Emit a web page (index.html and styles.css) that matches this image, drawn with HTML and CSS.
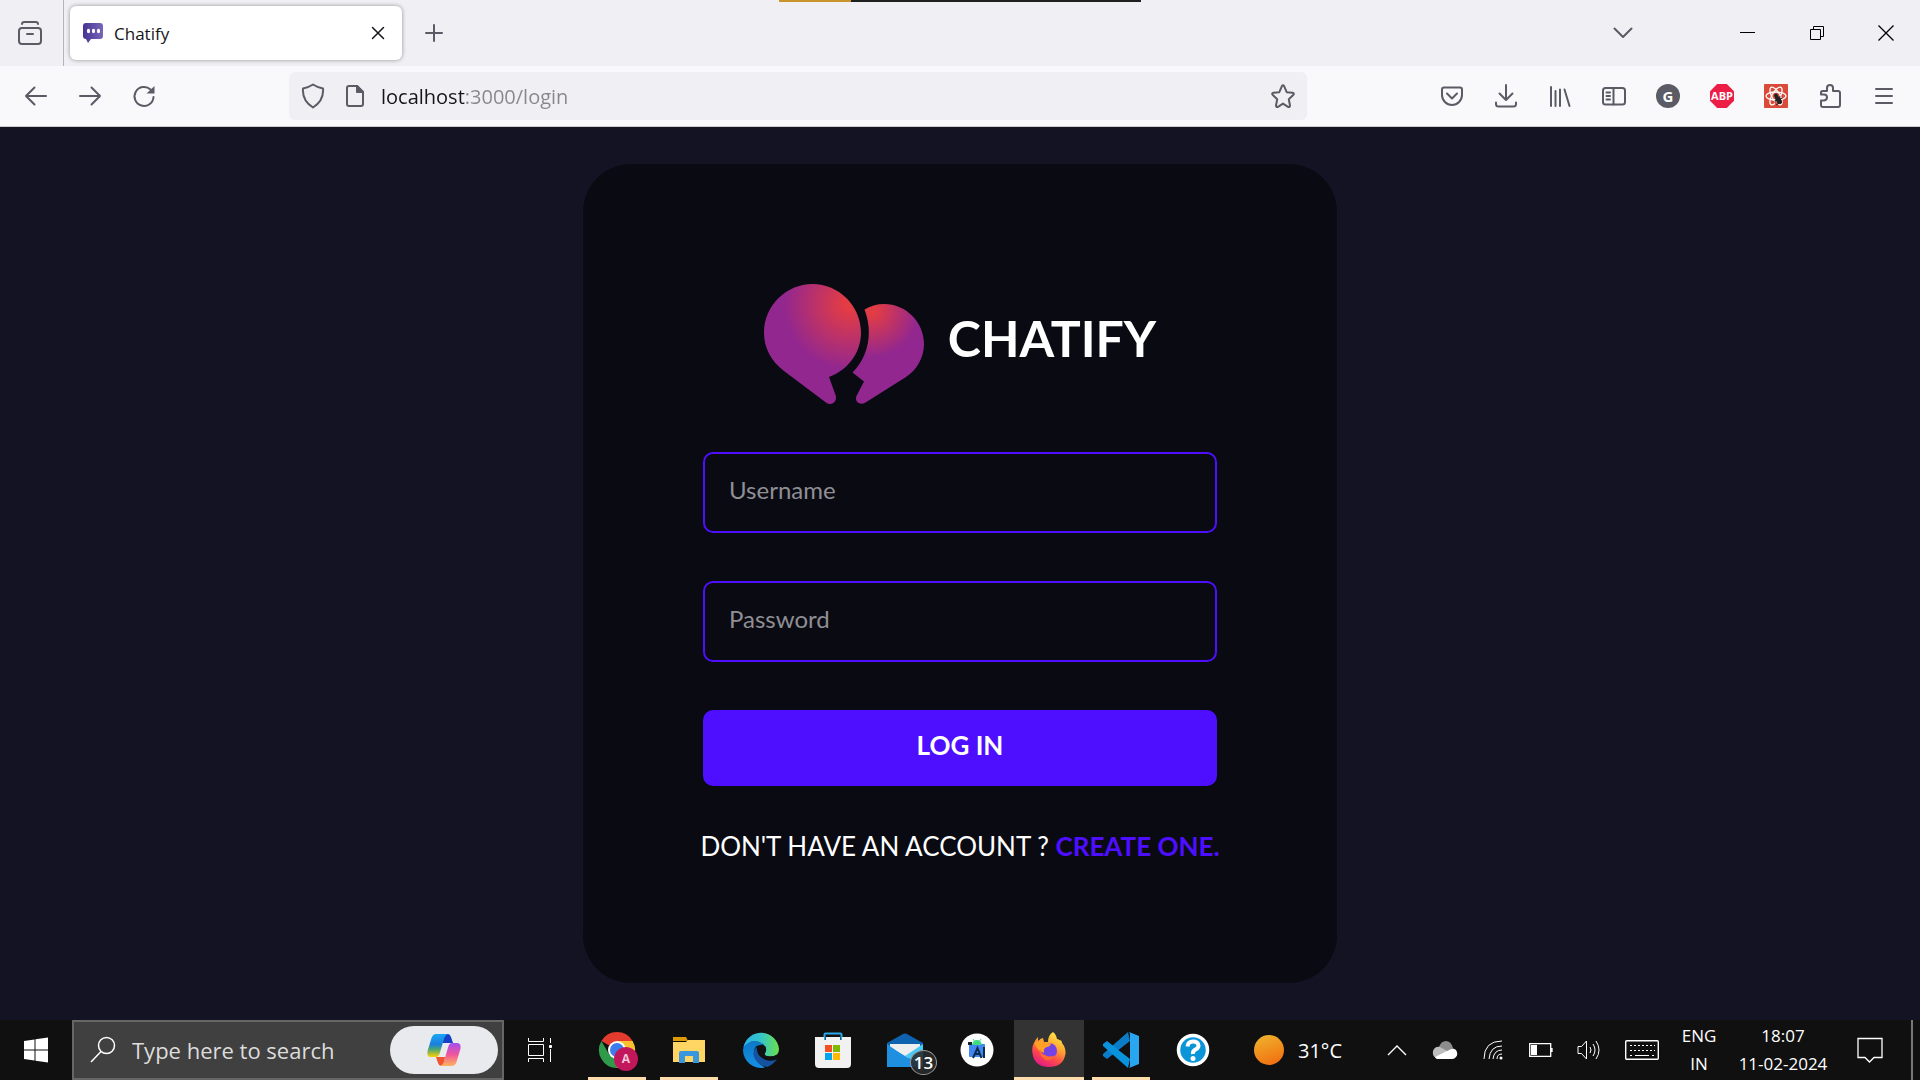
FILE: index.html
```html
<!DOCTYPE html>
<html lang="en">
<head>
<meta charset="utf-8">
<meta name="viewport" content="width=device-width, initial-scale=1">
<title>Chatify</title>
<link rel="stylesheet" href="styles.css">
</head>
<body>
<div class="screen">
  <div class="capture-bar"></div>

  <header class="browser">
    <div class="tabs">
      <button class="tabs-view" aria-label="View recent browsing">
        <svg width="24" height="24" viewBox="0 0 24 24" class="line"><rect x="1" y="7" width="22" height="16" rx="3"/><path d="M4 3Q4 1 6.500 1H17.500Q20 1 20 3M9 13h6"/></svg>
      </button>
      <div class="tab">
        <svg width="22" height="22" viewBox="0 0 22 22"><defs><linearGradient id="fav"><stop offset="0" stop-color="#463490"/><stop offset="1" stop-color="#7766bb"/></linearGradient></defs><path fill="url(#fav)" d="M4 1H18Q21 1 21 4V14Q21 17 18 17H9L6 21L4 17Q1 17 1 14V4Q1 1 4 1Z"/><g fill="#fff"><ellipse cx="6.500" cy="9" rx="1.600" ry="2.300"/><ellipse cx="11.500" cy="9" rx="1.600" ry="2.300"/><ellipse cx="16.500" cy="9" rx="1.600" ry="2.300"/></g></svg>
        <span class="tab-title">Chatify</span>
        <button class="tab-close" aria-label="Close tab"><svg width="14" height="14" viewBox="0 0 14 14" class="line dark"><path d="M1.500 1.500l11 11M12.500 1.500l-11 11"/></svg></button>
      </div>
      <button class="new-tab" aria-label="New tab"><svg width="18" height="18" viewBox="0 0 18 18" class="line"><path d="M9 1v16M1 9h16"/></svg></button>
      <div class="window-buttons">
        <button class="list-tabs" aria-label="List all tabs"><svg width="20" height="12" viewBox="0 0 20 12" class="line"><path d="M1.500 1.500L10 10l8.500-8.500"/></svg></button>
        <button aria-label="Minimize"><svg width="16" height="16" viewBox="0 0 16 16" class="thin"><path d="M0 7.500h15"/></svg></button>
        <button aria-label="Restore"><svg width="16" height="16" viewBox="0 0 16 16" class="thin"><path d="M1.500 4.500h10v10h-10zM4.500 4.500v-3h10v10h-3"/></svg></button>
        <button aria-label="Close"><svg width="18" height="18" viewBox="0 0 18 18" class="thin"><path stroke-width="1.300" d="M1.500 1.500l15 15M16.500 1.500l-15 15"/></svg></button>
      </div>
    </div>

    <div class="toolbar">
      <button class="tool" aria-label="Back"><svg width="24" height="24" viewBox="0 0 24 24" class="line"><path d="M22 12H2M10.500 3.500L2 12l8.500 8.500"/></svg></button>
      <button class="tool" aria-label="Forward"><svg width="24" height="24" viewBox="0 0 24 24" class="line"><path d="M2 12h20M13.500 3.500L22 12l-8.500 8.500"/></svg></button>
      <button class="tool" aria-label="Reload"><svg width="24" height="24" viewBox="0 0 24 24" class="line"><path d="M21.500 13A9.500 9.500 0 1 1 18.500 5.500L21 8"/><path fill="#5b5b66" stroke="none" d="M22.500 2v7.500h-8z"/></svg></button>
      <div class="urlbar">
        <svg width="24" height="26" viewBox="0 0 24 26" class="line"><path d="M12 1.500Q16.500 4.500 22 5.500Q23 17.500 12 24.500Q1 17.500 2 5.500Q7.500 4.500 12 1.500Z"/></svg>
        <svg width="20" height="24" viewBox="0 0 20 24" class="line"><path d="M4 2h8l6 6v12q0 2-2 2H4q-2 0-2-2V4q0-2 2-2Z"/><path fill="#5b5b66" d="M12 2v6h6Z"/></svg>
        <input class="url" type="text" aria-label="Address" value="localhost:3000/login">
        <button class="star" aria-label="Bookmark this page"><svg width="24" height="24" viewBox="0 0 24 24" class="line"><path d="M10.800 2.300Q12 .3 13.200 2.300L15.700 8.200L21.500 8.800Q23.700 9.200 22.200 11L17.800 15.200L19 21.500Q19 23.600 17 22.800L12 19.600L7 22.800Q5 23.600 5 21.500L6.200 15.200L1.800 11Q.3 9.200 2.500 8.800L8.300 8.200Z"/></svg></button>
      </div>
      <button class="tool" aria-label="Save to Pocket"><svg width="24" height="24" viewBox="0 0 24 24" class="line"><path d="M4 3.500h16q2 0 2 2V11A10 10 0 0 1 2 11V5.500q0-2 2-2Z"/><path d="M7 9.500l5 5 5-5"/></svg></button>
      <button class="tool" aria-label="Downloads"><svg width="24" height="24" viewBox="0 0 24 24" class="line"><path d="M12 1v15M5.500 9.500L12 16l6.500-6.500M2 18.500v1.500q0 2.500 2.500 2.500h15q2.500 0 2.500-2.500v-1.500"/></svg></button>
      <button class="tool" aria-label="Library"><svg width="24" height="24" viewBox="0 0 24 24" class="line"><path d="M3 3v19M7.500 7v15M12 5.500V22M16.500 5.500L21.500 22"/></svg></button>
      <button class="tool" aria-label="Sidebars"><svg width="26" height="24" viewBox="0 0 26 24" class="line"><rect x="2" y="4" width="22" height="16.500" rx="2.500"/><path d="M12.500 4v16.500M5.500 8.500h3.500M5.500 12h3.500M5.500 15.500h3.500"/></svg></button>
      <button class="tool" aria-label="Account"><span class="account">G</span></button>
      <button class="tool" aria-label="Adblock Plus"><span class="abp">ABP</span></button>
      <button class="tool" aria-label="React Developer Tools"><svg width="24" height="24" viewBox="0 0 24 24"><rect width="24" height="24" rx="1" fill="#d94a38"/><g fill="none" stroke="#fff" stroke-width="1.300"><ellipse cx="12" cy="12" rx="10" ry="4"/><ellipse cx="12" cy="12" rx="10" ry="4" transform="rotate(60 12 12)"/><ellipse cx="12" cy="12" rx="10" ry="4" transform="rotate(120 12 12)"/></g><path fill="#d94a38" d="M11 16l5 7h-5z"/><g fill="#222" stroke="#222" stroke-width="1"><circle cx="12" cy="11.500" r="1.500"/><ellipse cx="14.500" cy="16" rx="2" ry="4" transform="rotate(-35 14.500 16)"/><path d="M10.500 17l8-3M12 21l6-4M16 12l-2 8M18 19l-6-6"/></g></svg></button>
      <button class="tool" aria-label="Extensions"><svg width="24" height="26" viewBox="0 0 24 26" class="line"><path d="M4.500 8H9V5Q9 2 12 2Q15 2 15 5V8h5q2 0 2 2v12q0 2-2 2H5q-2 0-2-2v-4.500h3Q9 17 9 14.500Q9 11.500 6 11.500H3V9.500Q3 8 4.500 8Z"/></svg></button>
      <button class="tool" aria-label="Open menu"><svg width="20" height="18" viewBox="0 0 20 18" class="line"><path d="M2 2h16M2 9h16M2 16h16"/></svg></button>
    </div>
  </header>

  <main class="page">
    <form class="card">
      <div class="brand">
        <svg width="160" height="120" viewBox="0 0 160 120">
          <defs>
            <radialGradient id="g1" gradientUnits="userSpaceOnUse" cx="86" cy="20" r="66"><stop offset="0.100" stop-color="#e23c45"/><stop offset="1" stop-color="#92278f"/></radialGradient>
            <radialGradient id="g2" gradientUnits="userSpaceOnUse" cx="108" cy="26" r="47"><stop offset="0.100" stop-color="#e23c45"/><stop offset="1" stop-color="#92278f"/></radialGradient>
          </defs>
          <path fill="url(#g1)" d="M48.500 0C75 0 97 22 97 48.500C97 69 84 86 65 93L71.500 111C74 118 67 122.500 62 118.500L20 87C7 77 0 64 0 48.500C0 22 22 0 48.500 0Z"/>
          <path fill="url(#g2)" d="M100.500 25.500C106 22 113 20 120 20C142 20 160 38 160 60C160 73 153 86 142 93L101.500 118.500C95.500 122 89.500 117 93 111L100 97.500L88.500 88.500C105 72 109 48 100.500 25.500Z"/>
        </svg>
        <h1>CHATIFY</h1>
      </div>
      <input class="field" type="text" placeholder="Username" aria-label="Username">
      <input class="field" type="password" placeholder="Password" aria-label="Password">
      <button class="submit" type="submit">LOG IN</button>
      <p class="signup">DON'T HAVE AN ACCOUNT ? <a href="#register">CREATE ONE.</a></p>
    </form>
  </main>

  <footer class="taskbar">
    <button class="start" aria-label="Start"><svg width="24" height="26" viewBox="0 0 24 26" fill="#fff"><path d="M0 4l10.500-1.500V12.500H0zM11.500 2.300L24 .5v12H11.500zM0 13.500h10.500v10L0 22zM11.500 13.500H24v12l-12.500-1.800z"/></svg></button>
    <label class="search">
      <svg width="26" height="28" viewBox="0 0 26 28" class="glyph"><circle cx="16.500" cy="9.500" r="8" stroke-width="1.500"/><path stroke-width="1.500" d="M11 15.500L1 26"/></svg>
      <input type="text" placeholder="Type here to search" aria-label="Search">
      <span class="copilot">
        <svg width="34" height="32" viewBox="0 0 34 32"><defs><linearGradient id="c1" x2="0" y2="1"><stop offset="0" stop-color="#19a7f5"/><stop offset=".45" stop-color="#1a7fe0"/><stop offset=".65" stop-color="#45a37a"/><stop offset="1" stop-color="#ffd200"/></linearGradient><linearGradient id="c2" x2="0" y2="1"><stop offset="0" stop-color="#a34df0"/><stop offset=".5" stop-color="#f0569b"/><stop offset="1" stop-color="#ffb45b"/></linearGradient></defs><path fill="#1641c4" d="M14 0h7q2 0 3 3l2 6H16z"/><path fill="#ee5530" d="M9 23h9l-1 9h-3q-2 0-3-3z"/><path fill="url(#c1)" d="M9 0H21Q18 1 17 5L12.500 20Q11.500 23 9 23H4Q-.5 23 .6 17L4.500 4Q6 0 9 0Z"/><path fill="url(#c2)" d="M25 32H13Q16 31 17 27L21.500 12Q22.500 9 25 9H30Q34.500 9 33.400 15L29.500 28Q28 32 25 32Z"/></svg>
      </span>
    </label>
    <button class="start" aria-label="Task view"><svg width="24" height="24" viewBox="0 0 24 24" class="glyph"><path d="M.5 6.500h15v11H.5zM.5 0v3.500h15V0M.5 24v-3.500h15V24M22.500 0v5M22.500 11v13"/><path fill="#fff" d="M21.500 7.500h2v2h-2z"/></svg></button>

    <nav class="apps">
      <button class="task running" aria-label="Chrome"><svg width="44" height="42" viewBox="0 0 44 42"><path fill="#e33b2e" d="M22 21L6.400 12A18 18 0 0 1 37.600 12Z"/><path fill="#fbc02d" d="M22 12H37.600A18 18 0 0 1 22 39Z"/><path fill="#2f9b4a" d="M22 39A18 18 0 0 1 6.400 12L14.200 25.500L22 30Z"/><circle cx="22" cy="21" r="9" fill="#fff"/><circle cx="22" cy="21" r="7" fill="#3b7ded"/><circle cx="31" cy="30" r="12" fill="#c2185b"/><text x="31" y="34" class="avatar">A</text></svg></button>
      <button class="task running" aria-label="File Explorer"><svg width="34" height="30" viewBox="0 0 34 30"><path fill="#dd9b08" d="M1 2h13l2 4H1z"/><path fill="#ffd664" d="M1 7h13l2-2h17v22H1z"/><path fill="#3a97de" d="M9 16h16q2 0 2 2v10h-6v-7h-8v7H7V18q0-2 2-2z"/></svg></button>
      <button class="task" aria-label="Edge"><svg width="36" height="36" viewBox="0 0 36 36"><defs><linearGradient id="e1"><stop offset="0" stop-color="#28b2e8"/><stop offset=".5" stop-color="#35c5c8"/><stop offset="1" stop-color="#6be04a"/></linearGradient><linearGradient id="e2" x2="0" y2="1"><stop offset="0" stop-color="#0d78c8"/><stop offset="1" stop-color="#1490e4"/></linearGradient></defs><circle cx="18" cy="18" r="18" fill="#111"/><path fill="url(#e2)" d="M0 18Q0 9 11 9Q20 9 23 16Q12 9 11 20Q12 31 22 35.500A18 18 0 0 1 0 18Z"/><path fill="#1553a0" d="M14 15Q8 20 12 27Q16 34 24 35Q31 32 34 27Q27 30 21 27Q13 23 14 15Z"/><path fill="url(#e1)" d="M.5 15A18 18 0 0 1 36 17Q36 25 27 24.500Q20 24 22 21Q25 16 20 12Q10 5 .5 15Z"/><path fill="#111" d="M20 12.500Q25 16 22 21Q20 24 27 24.500Q31 24.500 34 22.500V27Q27 30 21 27Q12 21 16 14Q18 12 20 12.500Z"/></svg></button>
      <button class="task" aria-label="Microsoft Store"><svg width="36" height="36" viewBox="0 0 36 36"><path fill="none" stroke="#28a8ea" stroke-width="2" d="M9.500 8V2.500q0-1 1-1h15q1 0 1 1V8"/><path fill="#f1f1f1" d="M0 5h9v3h2V5h14v3h2V5h9v27q0 4-4 4H4q-4 0-4-4z"/><path fill="#f25022" d="M10 13h7v7h-7z"/><path fill="#7fba00" d="M18 13h7v7h-7z"/><path fill="#00a4ef" d="M10 21h7v7h-7z"/><path fill="#ffb900" d="M18 21h7v7h-7z"/></svg></button>
      <button class="task mail" aria-label="Mail"><svg width="36" height="34" viewBox="0 0 36 34"><path fill="#0f62b0" d="M0 10L16 1q2-1 4 0l16 9v4H0z"/><path fill="#eee" d="M3 11h30v7L18 28 3 16z"/><path fill="#2196e3" d="M0 11l18 13L0 34z"/><path fill="#48c8f5" d="M36 11L18 23l18 11z"/><path fill="#1f8fe0" d="M0 34V12l36 22z"/></svg><span class="count">13</span></button>
      <button class="task" aria-label="Android Studio"><svg width="34" height="34" viewBox="0 0 34 34"><circle cx="17" cy="17" r="16.500" fill="#fff"/><rect x="9" y="11" width="16" height="13" rx="1" fill="#4285f4"/><path fill="#3ddc84" d="M12 12q1-5 5-5t5 5z"/><path stroke="#3ddc84" d="M13 6l2 3M21 6l-2 3"/><path fill="#123" d="M8 9h4v3H8z"/><path fill="none" stroke="#0b2d4a" stroke-width="2" d="M13 25l4.500-10 4 10M14.500 21h6M24 14v11"/></svg></button>
      <button class="task running active" aria-label="Firefox"><svg width="36" height="36" viewBox="0 0 36 36"><defs><linearGradient id="f1" x1=".8" x2=".3" y2="1"><stop offset="0" stop-color="#fff04a"/><stop offset=".4" stop-color="#ffa530"/><stop offset=".7" stop-color="#ff4a4a"/><stop offset="1" stop-color="#e0188a"/></linearGradient></defs><path fill="url(#f1)" d="M22 0Q25 2 26 7Q28 7 28 8Q31 8 31 11Q36 17 34 24Q31 35 18 35Q5 35 2 24Q0 16 3 11Q4 8 7 5V9Q10 6 12 6L13 10H17Q17 3 22 0Z"/><circle cx="18" cy="19" r="8" fill="#7542e5"/><path fill="#ffa024" d="M3 11Q9 8 13 10Q17 12 20 11Q20 14 16 15Q12 16 13 21Q7 19 5 14Z"/><path fill="#ff6a30" d="M9 17Q10 22 14 23Q19 26 25 23Q21 29 15 28Q8 25 9 17Z"/></svg></button>
      <button class="task running" aria-label="Visual Studio Code"><svg width="36" height="36" viewBox="0 0 36 36"><path fill="#0a7cc8" d="M27 9L4 27L0 24V22L25 0z"/><path fill="#0a93dd" d="M27 27L4 9L0 12V14L25 36z"/><path fill="#111" d="M27 10v16L16 18z"/><path fill="#29a6f0" d="M26 0L36 4V32L26 36Q27 35 27 33V3Q27 1 26 0Z"/></svg></button>
      <button class="task" aria-label="Get Help"><svg width="34" height="34" viewBox="0 0 34 34"><circle cx="17" cy="17" r="14.500" fill="#0a95d9" stroke="#fff" stroke-width="3.500"/><path fill="none" stroke="#fff" stroke-width="4" d="M11.500 13.500Q12 8.500 17 8.500T22.500 12.500Q22.500 15 19.500 16.500T17 21"/><circle cx="17" cy="25.500" r="2.500" fill="#fff"/></svg></button>
    </nav>

    <div class="tray">
      <button class="weather"><span class="sun"></span>31°C</button>
      <button aria-label="Show hidden icons"><svg width="20" height="12" viewBox="0 0 20 12" class="glyph"><path stroke-width="1.400" d="M1 11L10 2l9 9"/></svg></button>
      <button aria-label="OneDrive"><svg width="26" height="18" viewBox="0 0 26 18"><path fill="#8c8c8c" d="M7 6Q9 0 14 0t7 7l-7 4z"/><path fill="#bdbdbd" d="M4 17Q0 15 1 10Q3 5 8 6l9 5-10 6z"/><path fill="#fff" d="M3 16L17 9Q21 6 24 9Q27 14 23 17Q22 18 20 18H5Q4 18 3 16z"/></svg></button>
      <button aria-label="Network"><svg width="20" height="20" viewBox="0 0 20 20" class="glyph"><path d="M1 19Q1 1 19 1M6 19Q7 6 19 6M10 19Q11 10 19 10M14 19Q14 14 19 14"/><circle cx="18" cy="18" r="1.500" fill="#fff" stroke="none"/></svg></button>
      <button aria-label="Battery"><svg width="24" height="14" viewBox="0 0 24 14" class="glyph"><path stroke-width="1.300" d="M.7 .7h21v12.600H.7zM23 5v4"/><path fill="#fff" stroke="none" d="M2 2h6v10H2z"/></svg></button>
      <button aria-label="Volume"><svg width="24" height="20" viewBox="0 0 24 20" class="glyph"><path d="M1 6.500h3.500L9.500 1v18L4.500 13.500H1zM13 7q2 3 0 6M16 4q4 6 0 12M19 1q6 9 0 18"/></svg></button>
      <button class="keyboard" aria-label="Touch keyboard"><svg width="34" height="20" viewBox="0 0 34 20" class="glyph"><rect x=".7" y=".7" width="32.600" height="18.600" rx="1" stroke-width="1.400"/><path stroke-dasharray="2 2" d="M5 5.500h25M5 10.500h25"/><path d="M5 15.500h2M10 15.500h14M27 15.500h2"/></svg></button>
      <button class="stack language">ENG<br>IN</button>
      <button class="stack clock">18:07<br>11-02-2024</button>
      <button class="notices" aria-label="Notifications"><svg width="26" height="26" viewBox="0 0 26 26" class="glyph"><path stroke-width="1.300" d="M1 1.500h24v19h-8l-4.500 4.500L8 20.500H1z"/></svg></button>
      <button class="desktop" aria-label="Show desktop"></button>
    </div>
  </footer>
</div>
</body>
</html>
```
FILE: styles.css
```css
* { box-sizing: border-box; }

body {
  margin: 0;
  font-family: "Open Sans", "Noto Sans", sans-serif;
  background: #131324;
}

button {
  display: flex;
  align-items: center;
  justify-content: center;
  margin: 0;
  padding: 0;
  border: 0;
  background: none;
  color: inherit;
  font: inherit;
}

input {
  min-width: 0;
  border: 0;
  outline: 0;
  background: none;
  font: inherit;
}

svg { flex: none; display: block; }

.line {
  fill: none;
  stroke: #5b5b66;
  stroke-width: 2;
  stroke-linecap: round;
  stroke-linejoin: round;
}
.line.dark { stroke: #15141a; stroke-width: 1.5; }
.thin { fill: none; stroke: #000; }
.glyph { fill: none; stroke: #fff; }

.screen {
  display: flex;
  flex-direction: column;
  min-height: 100vh;
}

/* Screen capture strip over the top edge */
.capture-bar {
  position: absolute;
  top: 0;
  left: 50%;
  width: 362px;
  height: 2px;
  margin-left: -181px;
  background: linear-gradient(to right, #c9952b 20%, #202020 20%);
}

/* Browser window */
.tabs {
  display: flex;
  align-items: center;
  height: 66px;
  background: #f0f0f4;
}
.tabs-view {
  width: 64px;
  height: 66px;
  padding-right: 4px;
  border-right: 1px solid #b4b4bc;
}
.tab {
  display: flex;
  align-items: center;
  width: 332px;
  height: 54px;
  margin: 0 6px;
  padding: 0 10px 0 12px;
  border-radius: 6px;
  background: #fff;
  box-shadow: 0 0 4px rgba(0, 0, 0, .4);
}
.tab-title {
  flex: 1;
  margin-left: 10px;
  font-size: 17px;
  color: #15141a;
}
.tab-close { width: 28px; height: 28px; }
.new-tab { width: 52px; height: 52px; }
.window-buttons {
  display: flex;
  margin-left: auto;
}
.window-buttons button { width: 69px; height: 66px; }
.window-buttons .list-tabs { margin-right: 56px; }

.toolbar {
  display: flex;
  align-items: center;
  padding: 0 9px;
  height: 61px;
  background: #f9f9fb;
  border-bottom: 1px solid #cccccf;
}
.tool { width: 54px; height: 54px; }
.urlbar {
  display: flex;
  flex: 1;
  align-items: center;
  height: 48px;
  margin: 0 118px;
  padding: 0 12px;
  border-radius: 6px;
  background: #f0f0f4;
  gap: 20px;
}
.url {
  flex: 1;
  margin-left: -4px;
  padding: 0;
  font-size: 20px;
  color: transparent;
  background: linear-gradient(to right, #15141a 84px, #86868c 84px);
  -webkit-background-clip: text;
  background-clip: text;
}
.account {
  width: 24px;
  border-radius: 50%;
  background: #5b5b66;
  color: #fff;
  font: bold 15px/24px "Open Sans", sans-serif;
}
.abp {
  width: 24px;
  background: #ed1e45;
  clip-path: polygon(30% 0, 70% 0, 100% 30%, 100% 70%, 70% 100%, 30% 100%, 0 70%, 0 30%);
  color: #fff;
  font: bold 11px/24px "Open Sans", sans-serif;
}

/* Login page */
.page {
  display: flex;
  flex: 1;
  align-items: center;
  justify-content: center;
  background: #131324;
  font-family: Lato, sans-serif;
}
.card {
  display: flex;
  flex-direction: column;
  gap: 48px;
  width: 754px;
  max-width: 100%;
  padding: 120px;
  border-radius: 48px;
  background: #0a0a13;
}
.brand {
  display: flex;
  align-items: center;
  justify-content: center;
  gap: 24px;
  height: 120px;
}
.brand h1 {
  margin: 0;
  padding-bottom: 12px;
  font-size: 50px;
  line-height: 56px;
  color: #fff;
}
.field {
  height: 81px;
  padding: 0 24px 6px;
  border: 2px solid #4e0eff;
  border-radius: 10px;
  color: #fff;
  font-size: 24px;
}
.field::placeholder { color: #8f8f93; opacity: 1; }
.submit {
  height: 76px;
  padding-bottom: 6px;
  border-radius: 10px;
  background: #4e0eff;
  color: #fff;
  font-size: 26px;
  font-weight: bold;
}
.signup {
  align-self: center;
  margin: 0;
  padding-bottom: 5px;
  font-size: 26px;
  line-height: 24px;
  color: #fff;
  white-space: nowrap;
}
.signup a {
  color: #4e0eff;
  font-weight: bold;
  text-decoration: none;
}

/* Taskbar */
.taskbar {
  display: flex;
  height: 60px;
  background: #101010;
  color: #fff;
}
.start { width: 72px; }
.task {
  position: relative;
  width: 70px;
  height: 60px;
}
.search {
  display: flex;
  align-items: center;
  width: 432px;
  padding: 0 4px 0 16px;
  border: 2px solid #666;
  background: #404040;
}
.search input {
  flex: 1;
  margin-left: 16px;
  padding: 0;
  font-size: 22px;
  color: #fff;
}
.search input::placeholder { color: #dcdcdc; opacity: 1; }
.copilot {
  display: flex;
  align-items: center;
  justify-content: center;
  width: 108px;
  height: 48px;
  border-radius: 24px;
  background: #e8eaed;
}
.apps {
  display: flex;
  gap: 2px;
  margin-left: 6px;
}
.running::after {
  content: "";
  position: absolute;
  left: 6px;
  right: 6px;
  bottom: 0;
  height: 3px;
  background: #fddcab;
}
.active { background: #333; }
.active::after { left: 0; right: 0; }
.avatar {
  fill: #f4c6d8;
  font: bold 12px "Open Sans", sans-serif;
  text-anchor: middle;
}
.count {
  position: absolute;
  right: 3px;
  bottom: 5px;
  width: 27px;
  border: 1px solid #999;
  border-radius: 50%;
  background: rgba(40, 44, 48, .9);
  font-size: 17px;
  line-height: 23px;
  font-weight: 600;
}
.tray {
  display: flex;
  flex: 1;
  justify-content: flex-end;
}
.tray button { width: 48px; }
.tray .weather {
  justify-content: flex-start;
  width: 100px;
  margin-right: auto;
  margin-left: 26px;
  gap: 14px;
  font-size: 20px;
}
.sun {
  width: 30px;
  height: 30px;
  border-radius: 50%;
  background: linear-gradient(160deg, #eeb62f, #f3680d);
}
.tray .keyboard { width: 58px; }
.tray .stack {
  font-size: 17px;
  line-height: 28px;
}
.tray .language { width: 56px; }
.tray .clock { width: 112px; }
.tray .notices { width: 62px; margin-right: 10px; }
.tray .desktop { width: 9px; border-left: 2px solid #777; }
```
